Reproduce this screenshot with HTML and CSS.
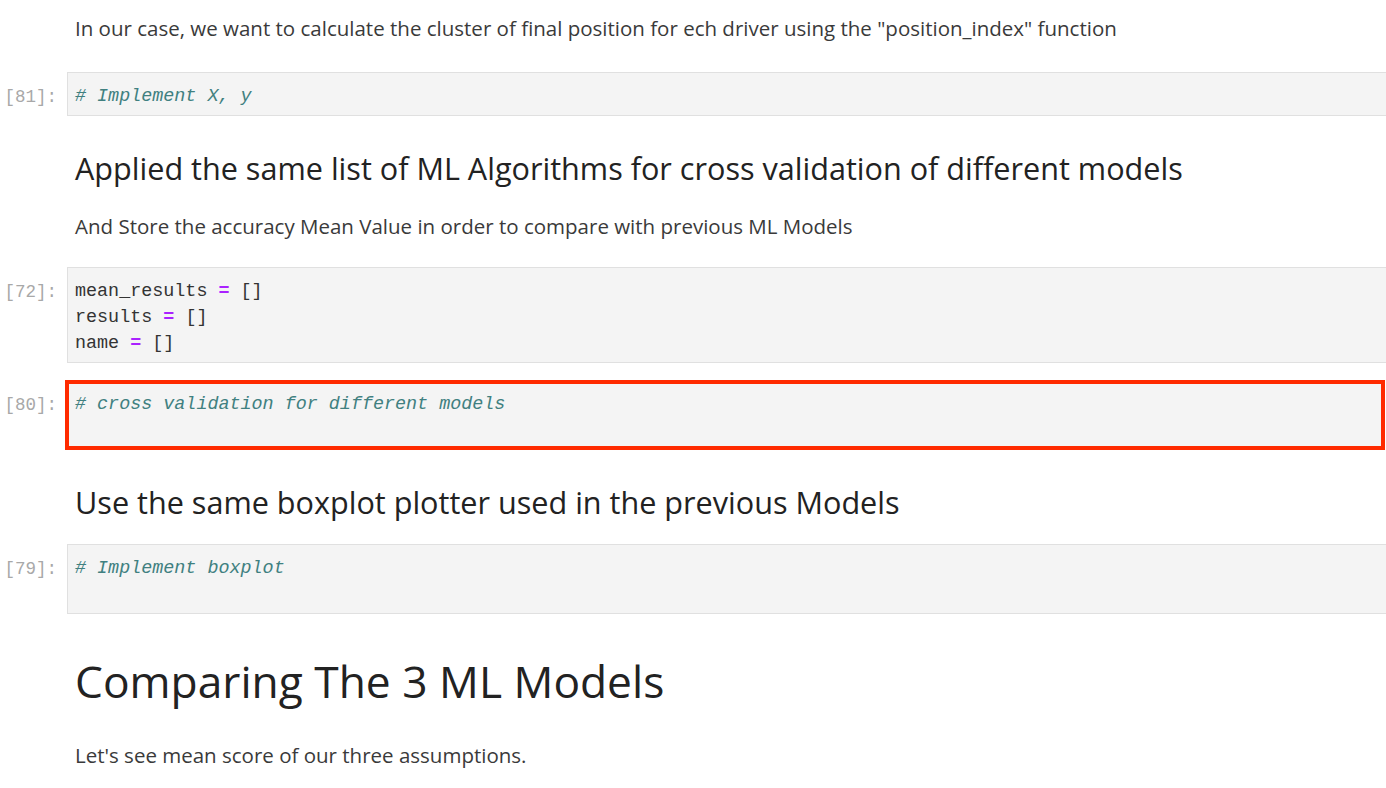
FILE: index.html
```html
<!DOCTYPE html>
<html>
<head>
<meta charset="utf-8">
<link rel="stylesheet" href="styles.css">
</head>
<body>
<div class="nb">
  <div class="row md-row first">
    <div class="prompt"></div>
    <div class="md"><p class="para">In our case, we want to calculate the cluster of final position for ech driver using the "position_index" function</p></div>
  </div>

  <div class="row code-row r-81">
    <div class="prompt">[81]:</div>
    <div class="cell"><div class="code"><div class="ln"><span class="c"># Implement X, y</span></div></div></div>
  </div>

  <div class="row md-row r-h2a">
    <div class="prompt"></div>
    <div class="md"><h2 class="h2">Applied the same list of ML Algorithms for cross validation of different models</h2></div>
  </div>

  <div class="row md-row r-pa">
    <div class="prompt"></div>
    <div class="md"><p class="para">And Store the accuracy Mean Value in order to compare with previous ML Models</p></div>
  </div>

  <div class="row code-row r-72">
    <div class="prompt">[72]:</div>
    <div class="cell"><div class="code">
      <div class="ln">mean_results <span class="o">=</span> []</div>
      <div class="ln">results <span class="o">=</span> []</div>
      <div class="ln">name <span class="o">=</span> []</div>
    </div></div>
  </div>

  <div class="row code-row r-80">
    <div class="prompt">[80]:</div>
    <div class="cell cell-hl"><div class="code">
      <div class="ln"><span class="c"># cross validation for different models</span></div>
      <div class="ln empty"></div>
    </div></div>
  </div>

  <div class="row md-row r-h2b">
    <div class="prompt"></div>
    <div class="md"><h2 class="h2">Use the same boxplot plotter used in the previous Models</h2></div>
  </div>

  <div class="row code-row r-79">
    <div class="prompt">[79]:</div>
    <div class="cell"><div class="code">
      <div class="ln"><span class="c"># Implement boxplot</span></div>
      <div class="ln empty"></div>
    </div></div>
  </div>

  <div class="row md-row r-h1">
    <div class="prompt"></div>
    <div class="md"><h1 class="h1">Comparing The 3 ML Models</h1></div>
  </div>

  <div class="row md-row r-pb">
    <div class="prompt"></div>
    <div class="md"><p class="para">Let's see mean score of our three assumptions.</p></div>
  </div>
</div>
</body>
</html>
```

FILE: styles.css
```css
html, body {
  margin: 0;
  padding: 0;
  background: #ffffff;
  overflow: hidden;
}

.nb {
  display: flex;
  flex-direction: column;
  font-family: "Open Sans", "Noto Sans", sans-serif;
  color: #333333;
}

.row {
  display: flex;
  align-items: flex-start;
}

.prompt {
  width: 57px;
  flex: none;
  padding-right: 10px;
  text-align: right;
  font-family: "Liberation Mono", "DejaVu Sans Mono", monospace;
  font-size: 17.5px;
  line-height: 26px;
  color: #a8a8a8;
}

.code-row .prompt {
  padding-top: 12px;
}

.md {
  flex: 1;
  padding-left: 8px;
}

.para {
  margin: 0;
  font-size: 20.5px;
  line-height: 28px;
  color: #3a3a3a;
  white-space: nowrap;
}

.h2 {
  margin: 0;
  font-size: 30.6px;
  line-height: 36px;
  font-weight: 500;
  color: #222222;
  white-space: nowrap;
}

.h1 {
  margin: 0;
  font-size: 44.3px;
  line-height: 54px;
  font-weight: 500;
  color: #222222;
  white-space: nowrap;
}

.cell {
  flex: 1;
  background: #f4f4f4;
  border: 1px solid #e0e0e0;
  border-right: none;
  padding: 11px 7px 5px 7px;
}

.cell-hl {
  border: 4px solid #ff2a00;
  padding: 8px 7px 2px 6px;
  margin-left: -2px;
  margin-right: 1px;
}

.code {
  font-family: "Liberation Mono", "DejaVu Sans Mono", monospace;
  font-size: 18.4px;
  line-height: 26px;
  color: #333333;
}

.ln {
  height: 26px;
  white-space: pre;
}

.c {
  color: #408080;
  font-style: italic;
}

.o {
  color: #aa22ff;
  font-weight: bold;
}

.first { margin-top: 14px; }
.r-81 { margin-top: 30px; }
.r-h2a { margin-top: 34px; }
.r-pa { margin-top: 26px; }
.r-72 { margin-top: 27px; }
.r-80 { margin-top: 17px; }
.r-80 .prompt { padding-top: 12px; }
.r-h2b { margin-top: 34px; }
.r-79 { margin-top: 24px; }
.r-h1 { margin-top: 40px; }
.r-pb { margin-top: 33px; }
```
